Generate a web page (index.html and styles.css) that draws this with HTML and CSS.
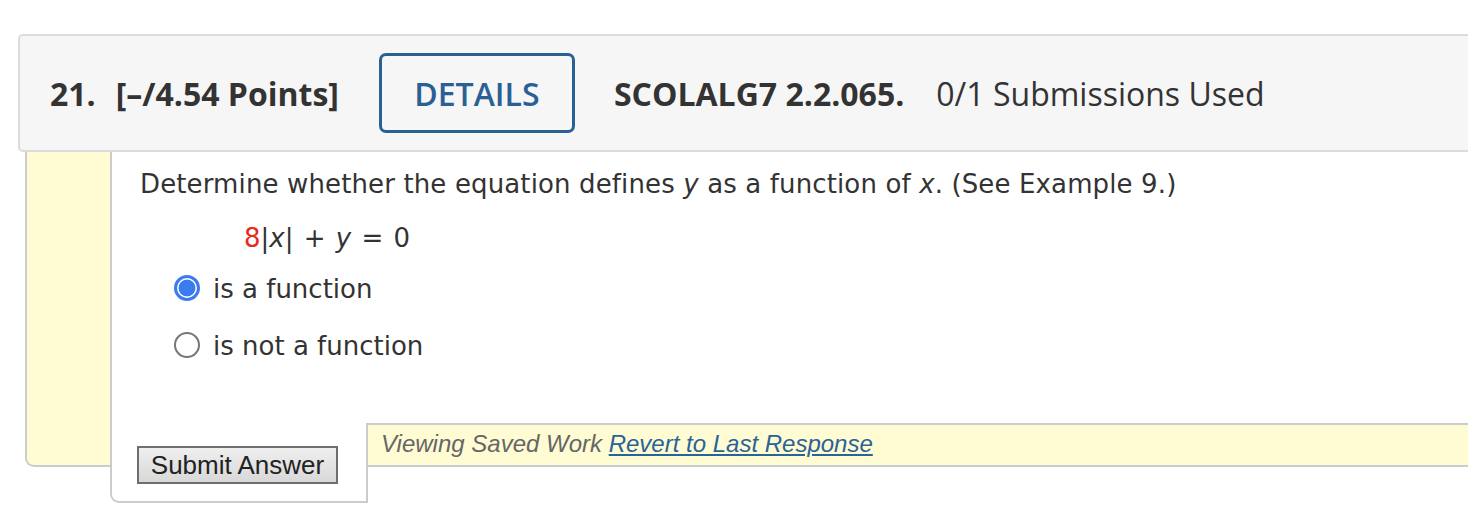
FILE: index.html
```html
<!DOCTYPE html>
<html>
<head>
<meta charset="utf-8">
<link rel="stylesheet" href="styles.css">
</head>
<body>
<div class="question">
  <div class="q-header">
    <span class="q-num">21.</span>
    <span class="q-points">[–/4.54 Points]</span>
    <span class="details-btn">DETAILS</span>
    <span class="q-code">SCOLALG7 2.2.065.</span>
    <span class="q-subs">0/1 Submissions Used</span>
  </div>
  <div class="q-body">
    <div class="q-content">
      <div class="q-text">Determine whether the equation defines <i>y</i> as a function of <i>x</i>. (See Example 9.)</div>
      <div class="q-eq"><span class="red">8</span>|<i>x</i>| + <i>y</i> = 0</div>
      <div class="radio-row first"><span class="radio checked"></span><span class="radio-label">is a function</span></div>
      <div class="radio-row second"><span class="radio"></span><span class="radio-label">is not a function</span></div>
    </div>
    <div class="q-bottom">
      <div class="submit-cell"><span class="submit-btn">Submit Answer</span></div>
      <div class="saved-bar"><span class="saved-text">Viewing Saved Work</span> <a class="revert-link" href="#">Revert to Last Response</a></div>
    </div>
  </div>
</div>
</body>
</html>
```

FILE: styles.css
```css
html, body {
  margin: 0;
  padding: 0;
  background: #ffffff;
  overflow: hidden;
}
body {
  width: 1468px;
  height: 528px;
}
.question {
  padding: 34px 0 0 18px;
  width: 1600px;
}
.q-header {
  box-sizing: border-box;
  height: 118px;
  border: 2px solid #dcdcdc;
  border-radius: 5px;
  background: #f6f6f6;
  display: flex;
  align-items: center;
  padding-left: 30px;
  font-family: "Open Sans", sans-serif;
  font-size: 32px;
  color: #333333;
}
.q-num {
  font-weight: 700;
  margin-right: 20px;
}
.q-points {
  font-weight: 700;
}
.details-btn {
  box-sizing: border-box;
  margin-left: 40px;
  width: 196px;
  height: 80px;
  border: 3px solid #2b6094;
  border-radius: 7px;
  color: #2b6094;
  font-weight: 600;
  display: flex;
  align-items: center;
  justify-content: center;
  background: #f6f6f6;
}
.q-code {
  font-weight: 700;
  margin-left: 39px;
}
.q-subs {
  margin-left: 32px;
}
.q-body {
  margin-left: 7px;
  border-left: 2px solid #cccccc;
  border-bottom: 2px solid #cccccc;
  border-bottom-left-radius: 9px;
  background: #fffcd4;
  padding-left: 83px;
}
.q-content {
  box-sizing: border-box;
  height: 271px;
  background: #ffffff;
  border-left: 2px solid #cccccc;
  padding: 14px 0 0 28px;
  font-family: "DejaVu Sans", Verdana, sans-serif;
  font-size: 26px;
  color: #333333;
}
.q-text, .q-eq, .radio-row {
  line-height: 36px;
  height: 36px;
}
.q-text {
  letter-spacing: 0.13px;
}
.q-eq {
  margin-top: 18px;
  padding-left: 104px;
  white-space: pre;
  word-spacing: 2px;
}
.red {
  color: #e62a1e;
}
.radio-row {
  display: flex;
  align-items: center;
  padding-left: 34px;
}
.radio-row.first {
  margin-top: 15px;
}
.radio-row.second {
  margin-top: 21px;
}
.radio {
  box-sizing: border-box;
  width: 26px;
  height: 26px;
  border-radius: 50%;
  border: 2px solid #767676;
  background: #ffffff;
  margin-right: 13px;
  position: relative;
  top: -1px;
}
.radio.checked {
  border: 3px solid #3a7bf2;
  background: radial-gradient(circle, #3a7bf2 0 8px, #ffffff 8.8px);
}
.q-bottom {
  display: flex;
  align-items: flex-start;
  height: 42px;
}
.submit-cell {
  box-sizing: border-box;
  width: 258px;
  height: 80px;
  margin-bottom: -38px;
  background: #ffffff;
  border-left: 2px solid #cccccc;
  border-right: 2px solid #cccccc;
  border-bottom: 2px solid #cccccc;
  border-bottom-left-radius: 9px;
  padding: 23px 0 0 25px;
  position: relative;
  z-index: 1;
}
.submit-btn {
  box-sizing: border-box;
  display: flex;
  align-items: center;
  justify-content: center;
  width: 201px;
  height: 38px;
  border: 2px solid #6e6e6e;
  background: linear-gradient(#efefef, #d8d8d8);
  font-family: "Liberation Sans", Arial, sans-serif;
  font-size: 26px;
  color: #222222;
}
.saved-bar {
  box-sizing: border-box;
  flex: 1;
  height: 42px;
  border-top: 2px solid #cccccc;
  background: #fffcd4;
  padding-left: 13px;
  font-family: "Liberation Sans", Arial, sans-serif;
  font-size: 24px;
  font-style: italic;
  line-height: 38px;
}
.saved-text {
  color: #666666;
}
.revert-link {
  color: #2a6496;
  text-decoration: underline;
}
```
